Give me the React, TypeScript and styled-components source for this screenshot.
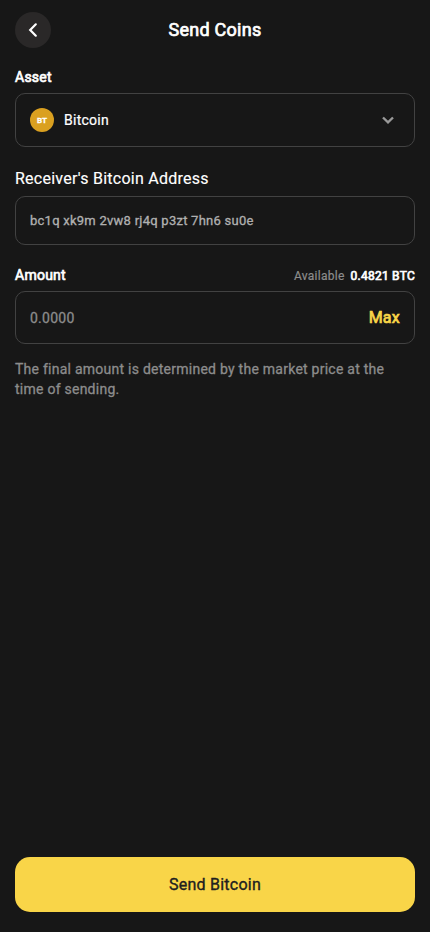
import React from "react";
import styled, { createGlobalStyle, css } from "styled-components";

const GlobalStyle = createGlobalStyle`
  * { box-sizing: border-box; }
  body { margin: 0; background: #171717; font-family: Roboto, sans-serif; color: #fff; letter-spacing: 0.25px; }
  button, input { font-family: inherit; letter-spacing: inherit; }
`;

const emphasis = css`
  font-weight: 400;
  -webkit-text-stroke: 0.7px currentColor;
`;

const Screen = styled.main`
  display: flex;
  flex-direction: column;
  height: 932px;
  padding: 12px 15px 20px;
  background: #171717;
`;

const Header = styled.header`
  display: grid;
  grid-template-columns: 36px 1fr 36px;
  align-items: center;
  height: 36px;
`;

const BackButton = styled.button`
  display: flex;
  align-items: center;
  justify-content: center;
  width: 36px;
  height: 36px;
  padding: 0;
  border: 0;
  border-radius: 50%;
  background: #2a2828;
  color: #fff;
`;

const Title = styled.h1`
  ${emphasis}
  margin: 0;
  font-size: 18px;
  line-height: 24px;
  text-align: center;
`;

const Field = styled.section<{ $top: number }>`
  margin-top: ${(p) => p.$top}px;
`;

const LabelRow = styled.div<{ $height: number; $gap: number }>`
  display: flex;
  align-items: center;
  justify-content: space-between;
  height: ${(p) => p.$height}px;
  margin-bottom: ${(p) => p.$gap}px;
`;

const Label = styled.label<{ $plain?: boolean }>`
  ${(p) =>
    p.$plain
      ? css`font-size: 16px; -webkit-text-stroke: 0.15px currentColor;`
      : css`${emphasis} font-size: 14px;`}
`;

const Box = styled.div<{ $height: number }>`
  display: flex;
  align-items: center;
  height: ${(p) => p.$height}px;
  padding: 0 14px;
  border: 1px solid #424242;
  border-radius: 10px;
`;

const Coin = styled.span`
  display: flex;
  align-items: center;
  justify-content: center;
  width: 24px;
  height: 24px;
  margin-right: 10px;
  border-radius: 50%;
  background: #daa020;
  font-size: 8px;
  font-weight: 700;
  letter-spacing: 0;
  -webkit-text-stroke: 0.3px currentColor;
`;

const AssetName = styled.span`
  flex: 1;
  font-size: 14px;
  -webkit-text-stroke: 0.2px currentColor;
`;

const Input = styled.input<{ $size: number; $color: string }>`
  flex: 1;
  min-width: 0;
  padding: 0;
  border: 0;
  outline: 0;
  background: transparent;
  font-size: ${(p) => p.$size}px;
  color: ${(p) => p.$color};
  -webkit-text-stroke: 0.3px currentColor;
  &::placeholder { color: #8c8c8c; opacity: 1; }
`;

const Available = styled.span`
  display: flex;
  gap: 6px;
  margin-top: 1px;
  font-size: 12px;
  color: #8c8c8c;
  -webkit-text-stroke: 0.2px currentColor;
`;

const Balance = styled.strong`
  ${emphasis}
  color: #fff;
`;

const MaxButton = styled.button`
  ${emphasis}
  padding: 0;
  border: 0;
  background: none;
  font-size: 16px;
  color: #f9d548;
`;

const Note = styled.p`
  margin: 15px 0 0;
  font-size: 14px;
  line-height: 20px;
  color: #8c8c8c;
  -webkit-text-stroke: 0.3px currentColor;
`;

const SendButton = styled.button`
  height: 55px;
  margin-top: auto;
  border: 0;
  border-radius: 15px;
  background: #f9d548;
  color: #202020;
  font-size: 16px;
  -webkit-text-stroke: 0.35px currentColor;
`;

export default function App() {
  return (
    <Screen>
      <GlobalStyle />
      <Header>
        <BackButton aria-label="Back">
          <svg width="20" height="20" viewBox="0 0 20 20" fill="none" stroke="currentColor" strokeWidth="2.2" strokeLinecap="round">
            <path d="M12.8 4.3 L7.2 10 L12.8 15.7" />
          </svg>
        </BackButton>
        <Title>Send Coins</Title>
      </Header>
      <Field $top={20}>
        <LabelRow $height={17} $gap={8}><Label>Asset</Label></LabelRow>
        <Box $height={54}>
          <Coin>BT</Coin>
          <AssetName>Bitcoin</AssetName>
          <svg width="24" height="24" viewBox="0 0 24 24" fill="none" stroke="#999" strokeWidth="2.4">
            <path d="M7 9.5 L12 14.3 L17 9.5" />
          </svg>
        </Box>
      </Field>
      <Field $top={20}>
        <LabelRow $height={23} $gap={6}><Label htmlFor="address" $plain>Receiver's Bitcoin Address</Label></LabelRow>
        <Box $height={49}>
          <Input id="address" $size={13} $color="#b0b0b0" defaultValue="bc1q xk9m 2vw8 rj4q p3zt 7hn6 su0e" />
        </Box>
      </Field>
      <Field $top={20}>
        <LabelRow $height={20} $gap={6}>
          <Label htmlFor="amount">Amount</Label>
          <Available>Available <Balance>0.4821 BTC</Balance></Available>
        </LabelRow>
        <Box $height={53}>
          <Input id="amount" $size={14} $color="#fff" placeholder="0.0000" />
          <MaxButton>Max</MaxButton>
        </Box>
      </Field>
      <Note>The final amount is determined by the market price at the time of sending.</Note>
      <SendButton>Send Bitcoin</SendButton>
    </Screen>
  );
}
